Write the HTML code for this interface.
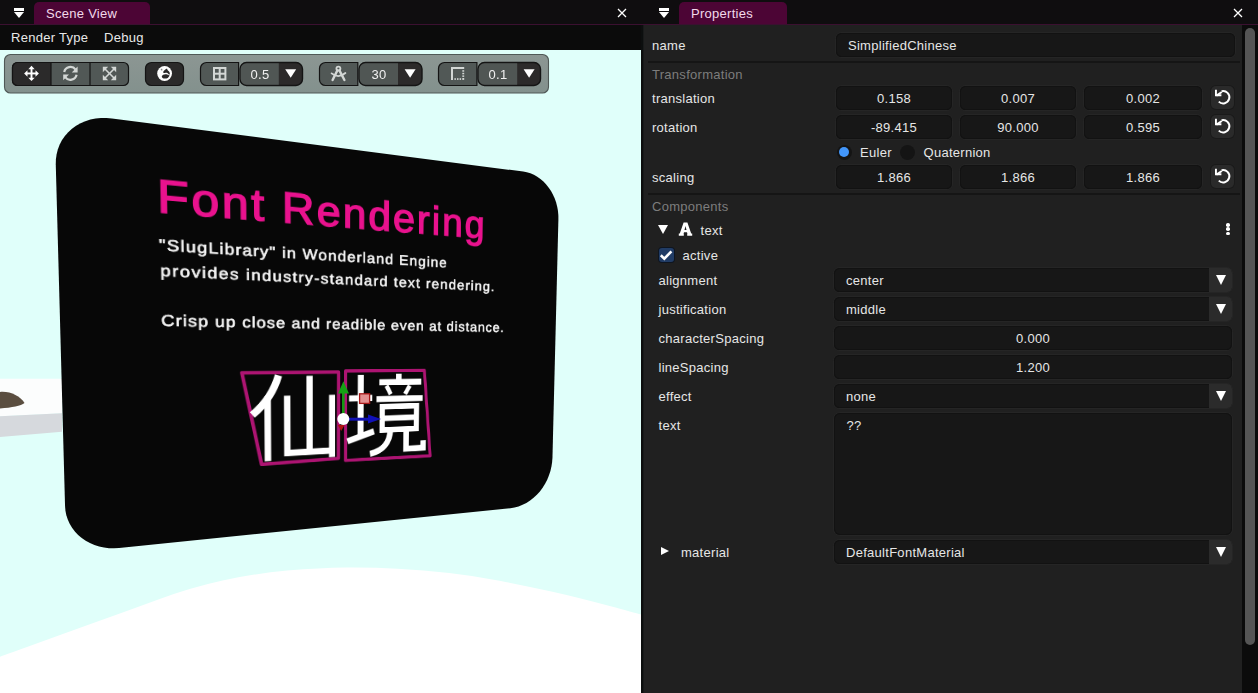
<!DOCTYPE html>
<html><head><meta charset="utf-8">
<style>
*{box-sizing:border-box;margin:0;padding:0}
html,body{width:1258px;height:693px;overflow:hidden;background:#0d0c0d;font-family:"Liberation Sans",sans-serif;font-size:13px;color:#e6e6e6}
.a{position:absolute}
.t{position:absolute;white-space:nowrap;line-height:1;letter-spacing:0.28px}
.fld{position:absolute;background:#171717;border-radius:6px;box-shadow:inset 0 0 0 1px #121212,0 0 0 1px #252525}
.rst{position:absolute;background:#2a2a2a;border-radius:5px;width:23px;height:23px;box-shadow:0 0 0 1px #1a1a1a}
.dd{position:absolute;background:#2b2b2b;border-radius:0 4.5px 4.5px 0;width:23px}
.tri{position:absolute;width:0;height:0;border-left:5.5px solid transparent;border-right:5.5px solid transparent;border-top:10px solid #fff}
</style></head>
<body>
<!-- top tab bar -->
<div class="a" style="left:0;top:0;width:1258px;height:24px;background:#0f0d0f"></div>
<div class="a" style="left:0;top:24px;width:1258px;height:1px;background:#3b1030"></div>
<!-- left tab -->
<div class="a" style="left:34px;top:2px;width:116px;height:22px;background:#4c0535;border-radius:5px 5px 0 0"></div>
<div class="t" style="left:46px;top:7px;color:#f2d9ea">Scene View</div>
<!-- menu icon left -->
<div class="a" style="left:14px;top:8px;width:10px;height:2.5px;background:#fff"></div>
<div class="tri" style="left:14px;top:11.5px;border-left-width:5px;border-right-width:5px;border-top-width:6.5px"></div>
<!-- close X left -->
<svg class="a" style="left:617px;top:8px" width="10" height="10" viewBox="0 0 10 10"><path d="M1 1L9 9M9 1L1 9" stroke="#fff" stroke-width="1.3"/></svg>

<!-- right tab -->
<div class="a" style="left:679px;top:2px;width:108px;height:22px;background:#4c0535;border-radius:5px 5px 0 0"></div>
<div class="t" style="left:691px;top:7px;color:#f2d9ea">Properties</div>
<div class="a" style="left:659px;top:8px;width:10px;height:2.5px;background:#fff"></div>
<div class="tri" style="left:659px;top:11.5px;border-left-width:5px;border-right-width:5px;border-top-width:6.5px"></div>
<svg class="a" style="left:1233px;top:8px" width="10" height="10" viewBox="0 0 10 10"><path d="M1 1L9 9M9 1L1 9" stroke="#fff" stroke-width="1.3"/></svg>

<!-- menu bar -->
<div class="a" style="left:0;top:25px;width:641px;height:25px;background:#0b0b0b"></div>
<div class="t" style="left:11px;top:31px;color:#e8e8e8">Render Type</div>
<div class="t" style="left:104px;top:31px;color:#e8e8e8">Debug</div>

<!-- viewport -->
<div class="a" id="vp" style="left:0;top:50px;width:641px;height:643px;background:#e0fffa;overflow:hidden">
</div>

<!-- scene -->
<svg class="a" style="left:0;top:50px" width="641" height="643" viewBox="0 50 641 643">
<path d="M-5 658.5Q0 656.7 31.8 645.2Q63.6 633.8 95.4 622.3Q127.2 610.9 159.0 599.2Q190.8 587.5 222.6 580.5Q254.4 573.5 287.2 570.6Q320 567.8 345.9 567.5Q371.7 567.2 397.5 568.8Q423.4 570.3 449.2 573.1Q475 576 500.9 581.0Q526.7 586 552.5 591.8Q578.4 597.6 609.7 606.1Q641 614.6 643.5 615.3L646 616V693H-5Z" fill="#ffffff"/>
<path d="M0 378.7H62V413.3L0 416.2Z" fill="#fcfdfd"/>
<path d="M0 416.2L62 413.3V431.8L0 437Z" fill="#d6d9dd"/>
<path d="M0 392C10 391 20 396 24.5 403C21 406 12 407.5 0 408.5Z" fill="#5b4e40"/>
<path d="M55.77 164.45 L55.91 159.26 L56.62 154.18 L57.89 149.26 L59.71 144.55 L62.05 140.10 L64.90 135.96 L68.21 132.17 L71.96 128.76 L76.10 125.78 L80.58 123.25 L85.37 121.19 L90.40 119.62 L95.63 118.55 L101.00 117.99 L106.46 117.94 L111.95 118.40 L523.21 171.59 L526.84 172.27 L530.41 173.37 L533.88 174.87 L537.23 176.75 L540.41 178.99 L543.41 181.57 L546.19 184.47 L548.74 187.65 L551.02 191.08 L553.02 194.73 L554.73 198.57 L556.12 202.55 L557.19 206.65 L557.93 210.82 L558.34 215.03 L558.40 219.24 L552.48 457.11 L552.17 461.74 L551.48 466.35 L550.42 470.90 L548.98 475.35 L547.20 479.66 L545.08 483.80 L542.63 487.72 L539.89 491.39 L536.86 494.78 L533.59 497.84 L530.09 500.57 L526.40 502.92 L522.55 504.87 L518.57 506.41 L514.50 507.51 L510.38 508.15 L119.04 548.02 L114.00 548.31 L108.97 548.16 L104.00 547.56 L99.14 546.51 L94.43 545.03 L89.93 543.12 L85.68 540.79 L81.73 538.07 L78.12 534.99 L74.88 531.57 L72.06 527.84 L69.68 523.85 L67.77 519.62 L66.35 515.21 L65.44 510.66 L65.05 506.02Z" fill="#070707"/>
</svg>
<div class="a" id="sign" style="left:0;top:0;width:600px;height:448px;transform-origin:0 0;transform:matrix3d(1.172979,0.213615,0,0.000596,0.033828,1.044106,0,0.000106,0,0,1,0,54.314147,110.944630,0,1.000000)">
<div class="a" style="left:93.5px;top:49.5px;font-size:49px;line-height:1;color:#e9128e;-webkit-text-stroke:1.5px #e9128e;letter-spacing:2.62px;white-space:nowrap;transform-origin:0 0;transform:scaleX(1.06)">Font Rendering</div>
<div class="a" style="left:95px;top:117px;font-size:17px;line-height:1;color:#f4f4f4;-webkit-text-stroke:0.7px #f4f4f4;white-space:nowrap;letter-spacing:1.18px;transform-origin:0 0;transform:scaleX(1.1)">"SlugLibrary" in Wonderland Engine</div>
<div class="a" style="left:95.5px;top:144px;font-size:17px;line-height:1;color:#f4f4f4;-webkit-text-stroke:0.7px #f4f4f4;white-space:nowrap;letter-spacing:1.4px;transform-origin:0 0;transform:scaleX(1.1)">provides industry-standard text rendering.</div>
<div class="a" style="left:95.5px;top:197px;font-size:17px;line-height:1;color:#f4f4f4;-webkit-text-stroke:0.7px #f4f4f4;white-space:nowrap;letter-spacing:1.04px;transform-origin:0 0;transform:scaleX(1.1)">Crisp up close and readible even at distance.</div>
<svg class="a" style="left:0;top:0" width="600" height="448" viewBox="0 0 600 448">
<g fill="none" stroke="#ad1472" stroke-width="4" stroke-linejoin="round">
<path d="M180.2 262.2H293.2V366.6L201.6 368Z"/>
<path d="M302 261H405.4L414.8 370.6L302.2 369.4Z"/>
</g>
<g fill="none" stroke="#fff" stroke-width="7.5" stroke-linecap="butt">
<path d="M221.5 265.5Q214 292 191.5 310.5" stroke-width="8.5"/>
<path d="M208.9 289.5V364.8"/>
<path d="M258 266.4V356.5"/>
<path d="M231.5 289.3V356.5H285.3"/>
<path d="M285.3 289.4V364.4"/>
<path d="M321.2 265.9V343.1"/>
<path d="M306.4 294.3H336.1"/>
<path d="M304.5 346.3L338.5 335.7"/>
<path d="M370.8 264.9V274.9"/>
<path d="M345.2 275.3H401.3"/>
<path d="M354.6 279.6L360.2 290.2" stroke-width="5.5"/>
<path d="M385.6 280L379.4 290.4" stroke-width="5.5"/>
<path d="M341.5 295.9H403.5"/>
<path d="M349.2 305.4H395.2V334.6H349.2Z" stroke-width="7"/>
<path d="M349.2 320H395.2" stroke-width="7"/>
<path d="M360.2 334C359.4 350 352 360 333.5 363.4"/>
<path d="M381.2 334.5V359.5H404.8V349.9"/>
</g>
</svg>
</div>
<!-- gizmo -->
<svg class="a" style="left:0;top:0" width="641" height="693" viewBox="0 0 641 693">
<line x1="343.3" y1="418.9" x2="343.3" y2="392" stroke="#129a12" stroke-width="2.6"/>
<path d="M343.4 381.2L349 393.4H338Z" fill="#14a214"/>
<line x1="343.3" y1="419.2" x2="369" y2="419.2" stroke="#1010b0" stroke-width="3"/>
<path d="M381 419L368 414.4V423.6Z" fill="#1010b8"/>
<path d="M337.8 425L344.6 425L341.2 431Z" fill="#b01010"/>
<rect x="359.6" y="393.8" width="10" height="9.6" fill="#e39090" stroke="#a81818" stroke-width="1.3"/>
<circle cx="343.3" cy="418.9" r="6" fill="#fff"/>
</svg>

<!-- toolbar -->
<svg class="a" style="left:0;top:0" width="641" height="100" viewBox="0 0 641 100">
<defs><linearGradient id="tbg" x1="0" y1="0" x2="0" y2="1"><stop offset="0" stop-color="#8c9693"/><stop offset="1" stop-color="#83918d"/></linearGradient></defs><rect x="4.5" y="54.5" width="544" height="38.5" rx="6" fill="url(#tbg)" stroke="#505957" stroke-width="1.1"/>
<!-- group 1 -->
<rect x="12.5" y="62.5" width="116" height="23" rx="5" fill="#515856" stroke="#141414" stroke-width="1.2"/>
<path d="M17.5 62.5H51V85.5H17.5A5 5 0 0 1 12.5 80.5V67.5A5 5 0 0 1 17.5 62.5Z" fill="#2b2a2a" stroke="#141414" stroke-width="1.2"/>
<line x1="90" y1="62.5" x2="90" y2="85.5" stroke="#141414" stroke-width="1.2"/>
<!-- move icon -->
<g fill="#fff" stroke="none">
<rect x="26.6" y="72.5" width="9.8" height="1.9"/><rect x="30.55" y="68.6" width="1.9" height="9.7"/>
<path d="M31.5 65.8L34.7 69.2H28.3Z"/><path d="M31.5 81.1L34.7 77.7H28.3Z"/>
<path d="M24.1 73.45L27.5 70.25V76.65Z"/><path d="M38.9 73.45L35.5 70.25V76.65Z"/>
</g>
<!-- rotate icon -->
<g fill="none" stroke="#d3d7d5" stroke-width="2.2">
<path d="M64.2 72A6.4 6.4 0 0 1 75.6 69.6"/>
<path d="M76.6 74.8A6.4 6.4 0 0 1 65.2 77.2"/>
</g>
<path d="M77.6 66.6V72.4H71.8Z" fill="#d3d7d5"/>
<path d="M63.2 80.2V74.4H69Z" fill="#d3d7d5"/>
<!-- scale icon -->
<g stroke="#d3d7d5" stroke-width="1.6"><line x1="104.5" y1="68.5" x2="114.5" y2="78.5"/><line x1="114.5" y1="68.5" x2="104.5" y2="78.5"/></g>
<g fill="#d3d7d5"><path d="M102.8 66.8H108.2L102.8 72.2Z"/><path d="M116.2 66.8H110.8L116.2 72.2Z"/><path d="M102.8 80.2H108.2L102.8 74.8Z"/><path d="M116.2 80.2H110.8L116.2 74.8Z"/></g>
<!-- globe -->
<rect x="145.5" y="62.5" width="38" height="23" rx="6" fill="#2b2a2a" stroke="#141414" stroke-width="1.2"/>
<circle cx="164.6" cy="73.5" r="7.4" fill="#fff"/>
<path d="M161.8 76.2C162.4 74.4 165 73.8 167.2 74.4L169.6 75.4C168.8 77.6 166.6 78.8 164.6 78.6C163 78.4 161.8 77.6 161.8 76.2Z" fill="#2b2a2a"/>
<path d="M163 72.6C163.4 70.8 165.2 69 167 68.4C167.4 69.6 167.6 70.4 168.6 71C169.6 71.8 170 73.2 169.8 74.6L168.8 74.4C168 73 167 72.6 165.6 72.8C164.6 73 163.6 73.2 163 72.6Z" fill="#2b2a2a"/>
<path d="M160.6 69.2L162 68.6L162.6 70.2L161.2 70.6Z" fill="#8a8a8a"/>
<!-- grid snap -->
<path d="M238.6 62.5H206.5A6 6 0 0 0 200.5 68.5V79.5A6 6 0 0 0 206.5 85.5H238.6Z" fill="#515856" stroke="#141414" stroke-width="1.2"/>
<g fill="none" stroke="#d3d7d5" stroke-width="2"><rect x="214" y="68" width="11.4" height="11.4"/><line x1="219.7" y1="68" x2="219.7" y2="79.4"/><line x1="214" y1="73.7" x2="225.4" y2="73.7"/></g>
<rect x="240" y="62.5" width="62.5" height="23" rx="6.5" fill="#2c2a2a" stroke="#141414" stroke-width="1.4"/>
<path d="M278.8 63.2H246.5A5.8 5.8 0 0 0 240.7 69V79A5.8 5.8 0 0 0 246.5 84.8H278.8Z" fill="#505654"/>
<path d="M285.2 69.2H296.2L290.7 77.8Z" fill="#fff"/>
<!-- angle snap -->
<path d="M357.8 62.5H325.5A6 6 0 0 0 319.5 68.5V79.5A6 6 0 0 0 325.5 85.5H357.8Z" fill="#515856" stroke="#141414" stroke-width="1.2"/>
<g fill="none" stroke="#d3d7d5" stroke-linecap="round">
<circle cx="338.4" cy="68.6" r="2" stroke-width="1.8"/>
<path d="M337.4 70.4L332.6 80" stroke-width="2.4"/><path d="M339.4 70.4L344.4 80" stroke-width="2.4"/>
<path d="M331.6 73.4Q338.4 79 345.4 73" stroke-width="1.8"/>
</g>
<rect x="359" y="62.5" width="63" height="23" rx="6.5" fill="#2c2a2a" stroke="#141414" stroke-width="1.4"/>
<path d="M398 63.2H365.5A5.8 5.8 0 0 0 359.7 69V79A5.8 5.8 0 0 0 365.5 84.8H398Z" fill="#505654"/>
<path d="M404.6 69.2H415.6L410.1 77.8Z" fill="#fff"/>
<!-- scale snap -->
<path d="M476.9 62.5H444.5A6 6 0 0 0 438.5 68.5V79.5A6 6 0 0 0 444.5 85.5H476.9Z" fill="#515856" stroke="#141414" stroke-width="1.2"/>
<g fill="#d3d7d5"><rect x="451" y="67" width="13.2" height="2"/><rect x="451" y="67" width="2" height="13"/>
<rect x="462.3" y="70.2" width="1.9" height="1.5"/><rect x="462.3" y="72.8" width="1.9" height="1.5"/><rect x="462.3" y="75.4" width="1.9" height="1.5"/><rect x="462.3" y="78" width="1.9" height="1.9"/>
<rect x="454.4" y="78.2" width="1.5" height="1.7"/><rect x="457" y="78.2" width="1.5" height="1.7"/><rect x="459.6" y="78.2" width="1.5" height="1.7"/></g>
<rect x="478" y="62.5" width="62.5" height="23" rx="6.5" fill="#2c2a2a" stroke="#141414" stroke-width="1.4"/>
<path d="M517.2 63.2H484.5A5.8 5.8 0 0 0 478.7 69V79A5.8 5.8 0 0 0 484.5 84.8H517.2Z" fill="#505654"/>
<path d="M523.6 69.2H534.6L529.1 77.8Z" fill="#fff"/>
</svg>
<div class="t" style="left:241px;width:38px;top:68px;text-align:center;color:#f0f0f0">0.5</div>
<div class="t" style="left:360px;width:38px;top:68px;text-align:center;color:#f0f0f0">30</div>
<div class="t" style="left:479px;width:38px;top:68px;text-align:center;color:#f0f0f0">0.1</div>

<!-- properties panel -->
<div class="a" id="pp" style="left:644px;top:25px;width:599px;height:668px;background:#202020">
</div>
<div class="a" style="left:641px;top:25px;width:2px;height:668px;background:#0c0e0e"></div><div class="a" style="left:643px;top:25px;width:1px;height:668px;background:#181a1a"></div>
<!-- props content -->
<div class="t" style="left:652px;top:39px">name</div>
<div class="fld" style="left:836px;top:33px;width:399px;height:24px;border-radius:5.5px"></div>
<div class="t" style="left:848px;top:39px">SimplifiedChinese</div>
<div class="a" style="left:648px;top:61px;width:592px;height:2px;background:#151515"></div>
<div class="t" style="left:652px;top:68px;color:#7d7d7d">Transformation</div>
<div class="t" style="left:652px;top:91.6px">translation</div>
<div class="fld" style="left:836px;top:86px;width:116px;height:24px;border-radius:5.5px"></div>
<div class="t" style="left:836px;width:116px;top:91.6px;text-align:center">0.158</div>
<div class="fld" style="left:960px;top:86px;width:116px;height:24px;border-radius:5.5px"></div>
<div class="t" style="left:960px;width:116px;top:91.6px;text-align:center">0.007</div>
<div class="fld" style="left:1084px;top:86px;width:118px;height:24px;border-radius:5.5px"></div>
<div class="t" style="left:1084px;width:118px;top:91.6px;text-align:center">0.002</div>
<div class="rst" style="left:1211px;top:86px"></div>
<svg class="a" style="left:1211.0px;top:86.0px" width="24" height="24" viewBox="1211 86 24 24"><g><path d="M1221.6 91.2A6.2 6.2 0 1 1 1218.8 101.6" fill="none" stroke="#fff" stroke-width="2"/><path d="M1221.8 92L1216.4 95.6" stroke="#fff" stroke-width="2"/><path d="M1215 89.8H1216.9V94.3H1221.4V96.2H1215Z" fill="#fff"/></g></svg>
<div class="t" style="left:652px;top:120.6px">rotation</div>
<div class="fld" style="left:836px;top:115px;width:116px;height:24px;border-radius:5.5px"></div>
<div class="t" style="left:836px;width:116px;top:120.6px;text-align:center">-89.415</div>
<div class="fld" style="left:960px;top:115px;width:116px;height:24px;border-radius:5.5px"></div>
<div class="t" style="left:960px;width:116px;top:120.6px;text-align:center">90.000</div>
<div class="fld" style="left:1084px;top:115px;width:118px;height:24px;border-radius:5.5px"></div>
<div class="t" style="left:1084px;width:118px;top:120.6px;text-align:center">0.595</div>
<div class="rst" style="left:1211px;top:115px"></div>
<svg class="a" style="left:1211.0px;top:115.0px" width="24" height="24" viewBox="1211 86 24 24"><g><path d="M1221.6 91.2A6.2 6.2 0 1 1 1218.8 101.6" fill="none" stroke="#fff" stroke-width="2"/><path d="M1221.8 92L1216.4 95.6" stroke="#fff" stroke-width="2"/><path d="M1215 89.8H1216.9V94.3H1221.4V96.2H1215Z" fill="#fff"/></g></svg>
<div class="t" style="left:652px;top:170.6px">scaling</div>
<div class="fld" style="left:836px;top:165px;width:116px;height:24px;border-radius:5.5px"></div>
<div class="t" style="left:836px;width:116px;top:170.6px;text-align:center">1.866</div>
<div class="fld" style="left:960px;top:165px;width:116px;height:24px;border-radius:5.5px"></div>
<div class="t" style="left:960px;width:116px;top:170.6px;text-align:center">1.866</div>
<div class="fld" style="left:1084px;top:165px;width:118px;height:24px;border-radius:5.5px"></div>
<div class="t" style="left:1084px;width:118px;top:170.6px;text-align:center">1.866</div>
<div class="rst" style="left:1211px;top:165px"></div>
<svg class="a" style="left:1211.0px;top:165.0px" width="24" height="24" viewBox="1211 86 24 24"><g><path d="M1221.6 91.2A6.2 6.2 0 1 1 1218.8 101.6" fill="none" stroke="#fff" stroke-width="2"/><path d="M1221.8 92L1216.4 95.6" stroke="#fff" stroke-width="2"/><path d="M1215 89.8H1216.9V94.3H1221.4V96.2H1215Z" fill="#fff"/></g></svg>
<div class="a" style="left:836.5px;top:144.5px;width:15px;height:15px;border-radius:50%;background:#141414"></div>
<div class="a" style="left:839px;top:147px;width:10px;height:10px;border-radius:50%;background:#4296fa"></div>
<div class="t" style="left:860px;top:146.2px">Euler</div>
<div class="a" style="left:899.5px;top:144.5px;width:15px;height:15px;border-radius:50%;background:#141414"></div>
<div class="t" style="left:923.5px;top:146.2px">Quaternion</div>
<div class="a" style="left:648px;top:193px;width:592px;height:2px;background:#151515"></div>
<div class="t" style="left:652px;top:200px;color:#7d7d7d">Components</div>
<div class="tri" style="left:658px;top:225px;border-left-width:5px;border-right-width:5px;border-top-width:9px"></div>
<svg class="a" style="left:670px;top:215px" width="30" height="30" viewBox="670 215 30 30"><path fill-rule="evenodd" fill="#fff" d="M683.6 222.4H687.4L691.2 233.6H692.2V235.8H687.2V233.6H687.5L686.9 232.2H684.1L683.5 233.6H683.8V235.8H678.8V233.6H679.8Z M685.5 225.9L684.5 229.9H686.5Z"/></svg>
<div class="t" style="left:700.5px;top:224px">text</div>
<div class="a" style="left:1226.2px;top:223.2px;width:3.6px;height:3.6px;border-radius:50%;background:#fff"></div>
<div class="a" style="left:1226.2px;top:227.39999999999998px;width:3.6px;height:3.6px;border-radius:50%;background:#fff"></div>
<div class="a" style="left:1226.2px;top:231.6px;width:3.6px;height:3.6px;border-radius:50%;background:#fff"></div>
<div class="a" style="left:659px;top:247.6px;width:14.5px;height:14.5px;border-radius:3px;background:#213c65;box-shadow:0 0 0 1px #0e1520"></div>
<svg class="a" style="left:659px;top:248px" width="15" height="15" viewBox="0 0 15 15"><path d="M1.8 7.3L5.3 10.6L12.4 3.4" fill="none" stroke="#fff" stroke-width="2.6"/></svg>
<div class="t" style="left:682.5px;top:249px">active</div>
<div class="t" style="left:658.5px;top:274px">alignment</div>
<div class="t" style="left:658.5px;top:303px">justification</div>
<div class="t" style="left:658.5px;top:332px">characterSpacing</div>
<div class="t" style="left:658.5px;top:361px">lineSpacing</div>
<div class="t" style="left:658.5px;top:390px">effect</div>
<div class="t" style="left:658.5px;top:419px">text</div>
<div class="fld" style="left:834px;top:268px;width:398px;height:24px;border-radius:5.5px"></div>
<div class="dd" style="left:1209px;top:268px;height:24px"></div>
<div class="tri" style="left:1216px;top:274.5px"></div>
<div class="t" style="left:846px;top:274px">center</div>
<div class="fld" style="left:834px;top:297px;width:398px;height:24px;border-radius:5.5px"></div>
<div class="dd" style="left:1209px;top:297px;height:24px"></div>
<div class="tri" style="left:1216px;top:303.5px"></div>
<div class="t" style="left:846px;top:303px">middle</div>
<div class="fld" style="left:834px;top:326px;width:398px;height:24px;border-radius:5.5px"></div>
<div class="t" style="left:834px;width:398px;top:332px;text-align:center">0.000</div>
<div class="fld" style="left:834px;top:355px;width:398px;height:24px;border-radius:5.5px"></div>
<div class="t" style="left:834px;width:398px;top:361px;text-align:center">1.200</div>
<div class="fld" style="left:834px;top:384px;width:398px;height:24px;border-radius:5.5px"></div>
<div class="dd" style="left:1209px;top:384px;height:24px"></div>
<div class="tri" style="left:1216px;top:390.5px"></div>
<div class="t" style="left:846px;top:390px">none</div>
<div class="fld" style="left:834px;top:413px;width:398px;height:122px;border-radius:6px"></div>
<div class="t" style="left:846.5px;top:419px">??</div>
<div class="a" style="left:660.5px;top:547px;width:0;height:0;border-top:4.9px solid transparent;border-bottom:4.9px solid transparent;border-left:8.8px solid #fff"></div>
<div class="t" style="left:681px;top:545.8px">material</div>
<div class="fld" style="left:834px;top:540px;width:398px;height:24px;border-radius:5.5px"></div>
<div class="dd" style="left:1209px;top:540px;height:24px"></div>
<div class="tri" style="left:1216px;top:546.5px"></div>
<div class="t" style="left:846px;top:546px">DefaultFontMaterial</div>
<!-- scrollbar -->
<div class="a" style="left:1242px;top:25px;width:16px;height:668px;background:#0b0b0b"></div>
<div class="a" style="left:1245px;top:28px;width:10px;height:617px;background:#555;border-radius:5.5px"></div>
</body></html>
